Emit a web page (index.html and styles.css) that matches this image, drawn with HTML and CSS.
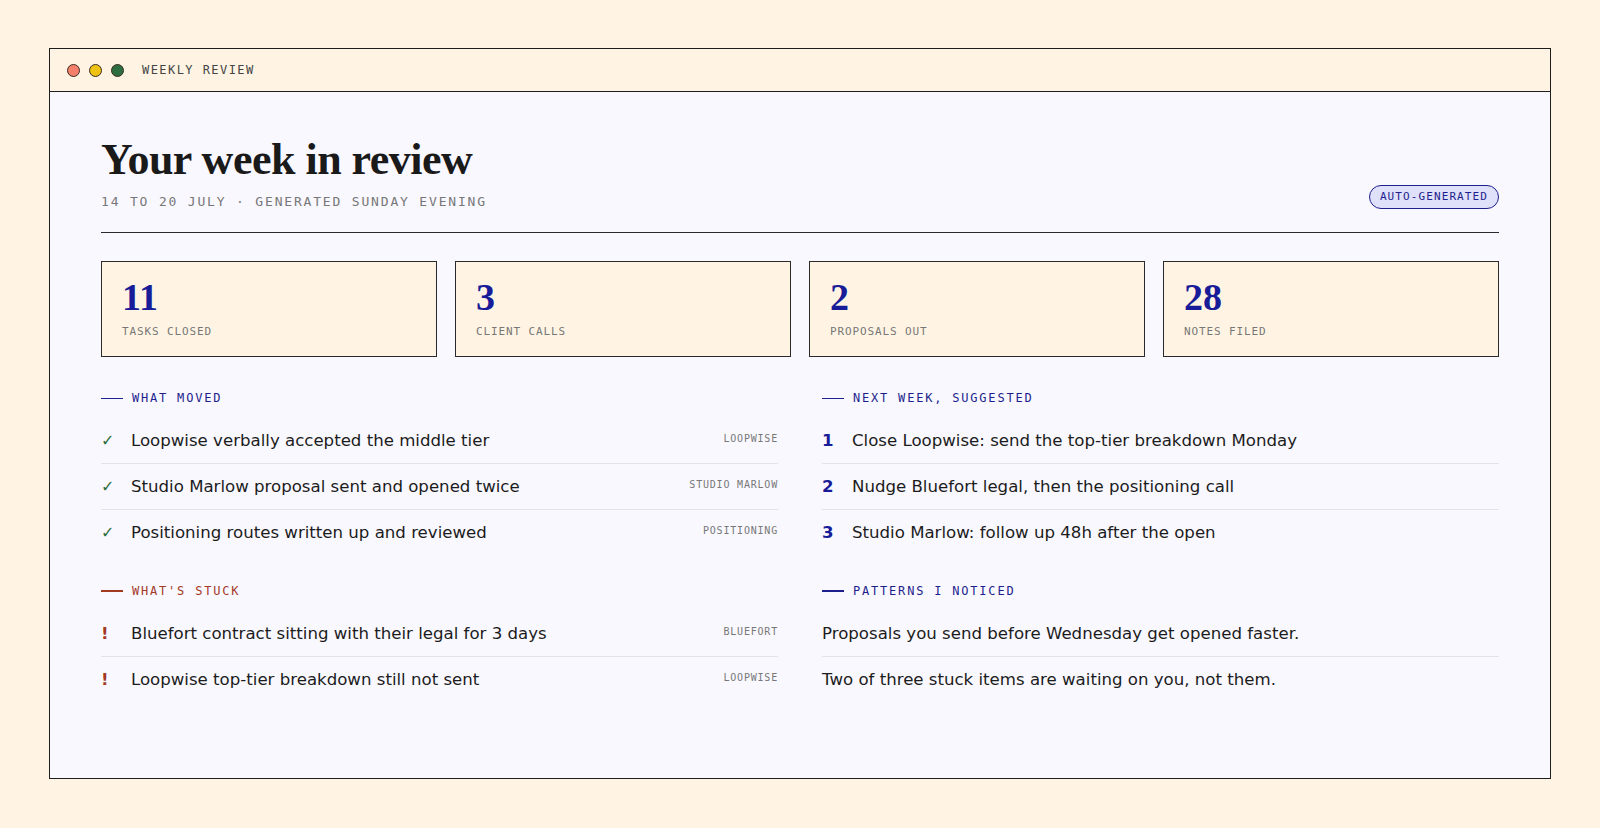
FILE: index.html
```html
<!DOCTYPE html>
<html lang="en">

<head>
    <meta charset="UTF-8">
    <meta name="viewport" content="width=device-width, initial-scale=1.0">
    <title>Weekly review</title>
    <link rel="stylesheet" href="styles.css">
</head>

<body>
    <div class="window">
        <div class="titlebar">
            <span class="dot red"></span>
            <span class="dot yellow"></span>
            <span class="dot green"></span>
            <span class="window-title">WEEKLY REVIEW</span>
        </div>

        <div class="content">
            <div class="page-head">
                <div>
                    <h1>Your week in review</h1>
                    <p class="subtitle">14 TO 20 JULY · GENERATED SUNDAY EVENING</p>
                </div>
                <span class="badge">AUTO-GENERATED</span>
            </div>

            <div class="stats">
                <div class="stat">
                    <div class="num">11</div>
                    <div class="label">TASKS CLOSED</div>
                </div>
                <div class="stat">
                    <div class="num">3</div>
                    <div class="label">CLIENT CALLS</div>
                </div>
                <div class="stat">
                    <div class="num">2</div>
                    <div class="label">PROPOSALS OUT</div>
                </div>
                <div class="stat">
                    <div class="num">28</div>
                    <div class="label">NOTES FILED</div>
                </div>
            </div>

            <div class="columns">
                <div class="section">
                    <h2 class="heading">WHAT MOVED</h2>
                    <ul class="rows">
                        <li><span class="mark done">✓</span><span class="text">Loopwise verbally accepted the middle tier</span><span class="tag">LOOPWISE</span></li>
                        <li><span class="mark done">✓</span><span class="text">Studio Marlow proposal sent and opened twice</span><span class="tag">STUDIO MARLOW</span></li>
                        <li><span class="mark done">✓</span><span class="text">Positioning routes written up and reviewed</span><span class="tag">POSITIONING</span></li>
                    </ul>
                </div>

                <div class="section">
                    <h2 class="heading">NEXT WEEK, SUGGESTED</h2>
                    <ul class="rows">
                        <li><span class="mark step">1</span><span class="text">Close Loopwise: send the top-tier breakdown Monday</span></li>
                        <li><span class="mark step">2</span><span class="text">Nudge Bluefort legal, then the positioning call</span></li>
                        <li><span class="mark step">3</span><span class="text">Studio Marlow: follow up 48h after the open</span></li>
                    </ul>
                </div>

                <div class="section">
                    <h2 class="heading stuck thick">WHAT'S STUCK</h2>
                    <ul class="rows">
                        <li><span class="mark warn">!</span><span class="text">Bluefort contract sitting with their legal for 3 days</span><span class="tag">BLUEFORT</span></li>
                        <li><span class="mark warn">!</span><span class="text">Loopwise top-tier breakdown still not sent</span><span class="tag">LOOPWISE</span></li>
                    </ul>
                </div>

                <div class="section">
                    <h2 class="heading thick">PATTERNS I NOTICED</h2>
                    <ul class="rows">
                        <li><span class="text">Proposals you send before Wednesday get opened faster.</span></li>
                        <li><span class="text">Two of three stuck items are waiting on you, not them.</span></li>
                    </ul>
                </div>
            </div>
        </div>
    </div>
</body>

</html>
```

FILE: styles.css
```css
body {
    margin: 0;
    background-color: #fff4e3;
    color: #1c1c1c;
    font-family: "DejaVu Sans", sans-serif;
}

.window {
    margin: 48px 49px;
    border: 1px solid #1e1e1e;
    background-color: #f9f8ff;
}

.titlebar {
    display: flex;
    align-items: center;
    height: 42px;
    padding: 0 17px;
    background-color: #fff4e3;
    border-bottom: 1px solid #1e1e1e;
}

.dot {
    width: 11px;
    height: 11px;
    border-radius: 50%;
    border: 1px solid #3a2a22;
    margin-right: 9px;
}

.red {
    background-color: #f47f6b;
}

.yellow {
    background-color: #eec211;
}

.green {
    background-color: #2c6e40;
}

.window-title {
    margin-left: 9px;
    font-family: "DejaVu Sans Mono", monospace;
    font-size: 12px;
    letter-spacing: 0.12em;
    color: #444;
}

.content {
    padding: 46px 51px 76px;
}

.page-head {
    display: flex;
    justify-content: space-between;
    align-items: flex-end;
    padding-bottom: 21px;
    border-bottom: 1px solid #2a2a2a;
}

h1 {
    margin: 0;
    font-family: "Liberation Serif", serif;
    font-size: 44px;
    line-height: 1;
    letter-spacing: -0.5px;
    color: #1a1a1a;
}

.subtitle {
    margin: 11px 0 0;
    font-family: "DejaVu Sans Mono", monospace;
    font-size: 13px;
    line-height: 18px;
    letter-spacing: 0.14em;
    color: #777;
}

.badge {
    margin-bottom: 2px;
    padding: 4px 10px;
    border: 1px solid #1d1f8c;
    border-radius: 12px;
    background-color: #dfe0fa;
    font-family: "DejaVu Sans Mono", monospace;
    font-size: 11px;
    line-height: 14px;
    letter-spacing: 0.1em;
    color: #1d1f8c;
}

.stats {
    display: grid;
    grid-template-columns: repeat(4, 1fr);
    gap: 18px;
    margin-top: 28px;
}

.stat {
    height: 94px;
    padding: 0 20px;
    border: 1px solid #2a2a2a;
    background-color: #fff4e3;
}

.num {
    margin-top: 15px;
    font-family: "Liberation Serif", serif;
    font-weight: bold;
    font-size: 38px;
    line-height: 40px;
    color: #181c98;
}

.label {
    margin-top: 8px;
    font-family: "DejaVu Sans Mono", monospace;
    font-size: 11px;
    letter-spacing: 0.08em;
    color: #777;
}

.columns {
    display: grid;
    grid-template-columns: 1fr 1fr;
    column-gap: 44px;
    row-gap: 28px;
    margin-top: 33px;
}

.heading {
    display: flex;
    align-items: center;
    margin: 0 0 12px;
    font-family: "DejaVu Sans Mono", monospace;
    font-weight: normal;
    font-size: 12px;
    line-height: 16px;
    letter-spacing: 0.15em;
    color: #1d1f8c;
}

.heading::before {
    content: "";
    width: 22px;
    height: 1px;
    margin-right: 9px;
    background-color: currentColor;
}

.heading.thick::before {
    height: 2px;
}

.heading.stuck {
    color: #a3391f;
}

.rows {
    margin: 0;
    padding: 0;
    list-style: none;
}

.rows li {
    display: flex;
    align-items: center;
    height: 23px;
    padding: 11px 0;
    border-bottom: 1px solid #e3e1ea;
    font-size: 16.6px;
    line-height: 23px;
}

.rows li:last-child {
    border-bottom: none;
}

.mark {
    width: 30px;
    flex-shrink: 0;
}

.done {
    color: #2c6e40;
    font-size: 16px;
}

.step {
    font-weight: bold;
    color: #181c98;
}

.warn {
    font-weight: bold;
    color: #a3391f;
}

.text {
    flex: 1;
}

.tag {
    font-family: "DejaVu Sans Mono", monospace;
    font-size: 10px;
    line-height: 14px;
    letter-spacing: 0.08em;
    color: #777;
    margin-top: -3px;
}
```
